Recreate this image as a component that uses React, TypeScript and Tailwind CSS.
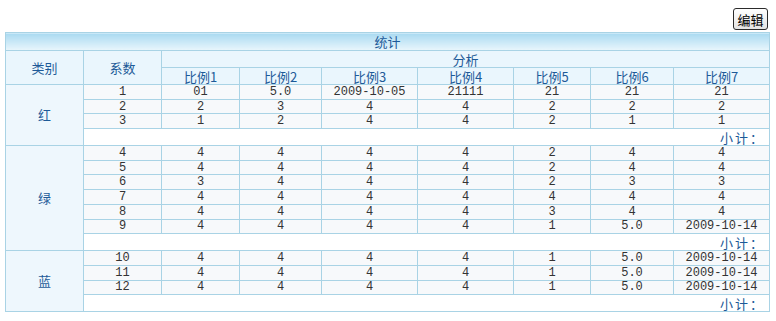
const cols = [78, 78, 78, 82, 96, 96, 77, 83, 96];

type Group = { label: string; rows: string[][] };

const groups: Group[] = [
  {
    label: '红',
    rows: [
      ['1', '01', '5.0', '2009-10-05', '21111', '21', '21', '21'],
      ['2', '2', '3', '4', '4', '2', '2', '2'],
      ['3', '1', '2', '4', '4', '2', '1', '1'],
    ],
  },
  {
    label: '绿',
    rows: [
      ['4', '4', '4', '4', '4', '2', '4', '4'],
      ['5', '4', '4', '4', '4', '2', '4', '4'],
      ['6', '3', '4', '4', '4', '2', '3', '3'],
      ['7', '4', '4', '4', '4', '4', '4', '4'],
      ['8', '4', '4', '4', '4', '3', '4', '4'],
      ['9', '4', '4', '4', '4', '1', '5.0', '2009-10-14'],
    ],
  },
  {
    label: '蓝',
    rows: [
      ['10', '4', '4', '4', '4', '1', '5.0', '2009-10-14'],
      ['11', '4', '4', '4', '4', '1', '5.0', '2009-10-14'],
      ['12', '4', '4', '4', '4', '1', '5.0', '2009-10-14'],
    ],
  },
];

const cjk = '[font-family:"Noto_Sans_CJK_SC",sans-serif]';

export default function App() {
  return (
    <div className="ml-[5px] w-[764px] bg-white pt-[8px]">
      {/* 工具栏 */}
      <div className="mb-[2px] flex justify-end pr-[1px]">
        <button
          className={`h-[22px] w-[35px] rounded-[3px] border border-[#2b2b2b] bg-gradient-to-b from-white to-[#e4e4e4] text-[13px] leading-none text-black ${cjk}`}
        >
          编辑
        </button>
      </div>

      <table className="w-[764px] table-fixed border-collapse border border-[#a9d3e5] text-center">
        <colgroup>
          {cols.map((w, i) => (
            <col key={i} style={{ width: w }} />
          ))}
        </colgroup>
        <thead className={`text-[13px] leading-none text-[#1d5a98] ${cjk}`}>
          <tr className="h-[18px]">
            <th
              colSpan={9}
              className="border border-[#a9d3e5] bg-gradient-to-b from-[#a9daf1] to-[#e9f6fc] font-normal"
            >
              统计
            </th>
          </tr>
          <tr className="h-[17px]">
            <th rowSpan={2} className="border border-[#a9d3e5] bg-[#eaf6fd] font-normal">
              类别
            </th>
            <th rowSpan={2} className="border border-[#a9d3e5] bg-[#eaf6fd] font-normal">
              系数
            </th>
            <th colSpan={7} className="border border-[#a9d3e5] bg-[#eaf6fd] font-normal">
              分析
            </th>
          </tr>
          <tr className="h-[17px]">
            {[1, 2, 3, 4, 5, 6, 7].map((n) => (
              <th key={n} className="border border-[#a9d3e5] bg-[#eaf6fd] font-normal">
                比例{n}
              </th>
            ))}
          </tr>
        </thead>
        <tbody>
          {groups.map((g) => (
            <Block key={g.label} group={g} />
          ))}
        </tbody>
      </table>
    </div>
  );
}

function Block({ group }: { group: Group }) {
  return (
    <>
      {group.rows.map((r, i) => (
        <tr key={i} className="h-[14.7px]">
          {i === 0 && (
            <td
              rowSpan={group.rows.length + 1}
              className={`border border-[#a9d3e5] bg-[#eef7fd] text-[13px] text-[#1d5a98] ${cjk}`}
            >
              {group.label}
            </td>
          )}
          {r.map((v, j) => (
            <td
              key={j}
              className="border border-[#a9d3e5] bg-[#f7f9fb] p-0 font-['Liberation_Mono',monospace] text-[12px] leading-[12px] text-[#333]"
            >
              {v}
            </td>
          ))}
        </tr>
      ))}
      {/* 小计 */}
      <tr className="h-[17px]">
        <td
          colSpan={8}
          className={`border border-[#a9d3e5] bg-white pr-[4px] text-right text-[13px] leading-none tracking-[2px] text-[#1d5a98] ${cjk}`}
        >
          小计：
        </td>
      </tr>
    </>
  );
}
